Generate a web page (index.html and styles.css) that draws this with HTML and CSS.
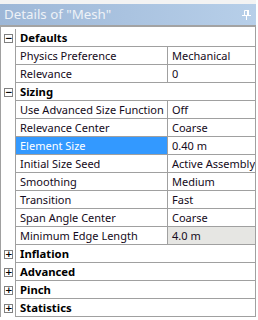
FILE: index.html
```html
<!DOCTYPE html>
<html>
<head>
<meta charset="utf-8">
<link rel="stylesheet" href="styles.css">
</head>
<body>
<div class="panel">
  <div class="top"></div>
  <div class="title">
    <span class="title-text">Details of "Mesh"</span>
    <svg class="pin" width="9" height="10" viewBox="0 0 9 10">
      <path d="M2.5 0.5 H6.5 V5.5 H2.5 Z" fill="none" stroke="#fff" stroke-width="1"/>
      <rect x="5" y="0" width="2" height="6" fill="#fff"/>
      <rect x="0" y="5" width="9" height="1" fill="#fff"/>
      <rect x="4" y="6" width="1" height="4" fill="#fff"/>
    </svg>
  </div>
  <div class="grid">
    <div class="row"><div class="gutter"><span class="box">−</span></div><div class="main section">Defaults</div></div>
    <div class="row"><div class="gutter"></div><div class="main"><div class="name">Physics Preference</div><div class="val">Mechanical</div></div></div>
    <div class="row"><div class="gutter"></div><div class="main"><div class="name">Relevance</div><div class="val">0</div></div></div>
    <div class="row"><div class="gutter"><span class="box">−</span></div><div class="main section">Sizing</div></div>
    <div class="row"><div class="gutter"></div><div class="main"><div class="name">Use Advanced Size Function</div><div class="val">Off</div></div></div>
    <div class="row"><div class="gutter"></div><div class="main"><div class="name">Relevance Center</div><div class="val">Coarse</div></div></div>
    <div class="row"><div class="gutter"></div><div class="main"><div class="name sel">Element Size</div><div class="val">0.40 m</div></div></div>
    <div class="row"><div class="gutter"></div><div class="main"><div class="name">Initial Size Seed</div><div class="val">Active Assembly</div></div></div>
    <div class="row"><div class="gutter"></div><div class="main"><div class="name">Smoothing</div><div class="val">Medium</div></div></div>
    <div class="row"><div class="gutter"></div><div class="main"><div class="name">Transition</div><div class="val">Fast</div></div></div>
    <div class="row"><div class="gutter"></div><div class="main"><div class="name">Span Angle Center</div><div class="val">Coarse</div></div></div>
    <div class="row"><div class="gutter"></div><div class="main"><div class="name">Minimum Edge Length</div><div class="val ro">4.0 m</div></div></div>
    <div class="row"><div class="gutter"><span class="box">+</span></div><div class="main section">Inflation</div></div>
    <div class="row"><div class="gutter"><span class="box">+</span></div><div class="main section">Advanced</div></div>
    <div class="row"><div class="gutter"><span class="box">+</span></div><div class="main section">Pinch</div></div>
    <div class="row"><div class="gutter"><span class="box">+</span></div><div class="main section">Statistics</div></div>
  </div>
</div>
</body>
</html>
```
FILE: styles.css
```css
html, body {
  margin: 0;
  padding: 0;
  background: #ffffff;
}
body {
  width: 258px;
  height: 320px;
  overflow: hidden;
  font-family: "Noto Sans", "Open Sans", sans-serif;
  font-size: 11px;
}
.panel {
  width: 256px;
}
.top {
  height: 4px;
  background: #f3f3f3;
}
.title {
  height: 21px;
  background: linear-gradient(to right, #9db7d7, #b7cfe9);
  display: flex;
  align-items: center;
  justify-content: space-between;
  padding: 0 4px 0 4px;
  border-bottom: 2px solid #a3a3a3;
  color: #eef2f7;
  font-size: 13.3px;
}
.title-text {
  line-height: 21px;
}
.pin {
  display: block;
  margin-right: 1px;
}
.grid {
  border-left: 1px solid #a0a0a0;
  border-right: 1px solid #a0a0a0;
  padding-top: 2px;
}
.row {
  display: flex;
  height: 18px;
}
.gutter {
  flex: 0 0 14px;
  width: 14px;
  border-right: 1px solid #a0a0a0;
  display: flex;
  align-items: center;
  background: #fff;
}
.box {
  width: 7px;
  height: 7px;
  margin-left: 3px;
  border: 1px solid #808080;
  font-family: "DejaVu Sans", sans-serif;
  font-size: 9px;
  line-height: 7px;
  text-align: center;
  color: #000;
  font-weight: bold;
}
.main {
  flex: 1;
  min-width: 0;
  display: flex;
  border-bottom: 1px solid #a0a0a0;
  color: #140a20;
  line-height: 17px;
  white-space: nowrap;
}
.main.section {
  font-weight: bold;
  color: #000;
  padding-left: 4px;
  font-size: 11.3px;
}
.name {
  flex: 0 0 147px;
  width: 147px;
  padding-left: 4px;
  border-right: 1px solid #a0a0a0;
  overflow: hidden;
}
.name.sel {
  background: #3399ff;
  color: #ffffff;
}
.val {
  flex: 1;
  min-width: 0;
  padding-left: 4px;
  overflow: hidden;
}
.val.ro {
  background: #e6e6e3;
}
```
